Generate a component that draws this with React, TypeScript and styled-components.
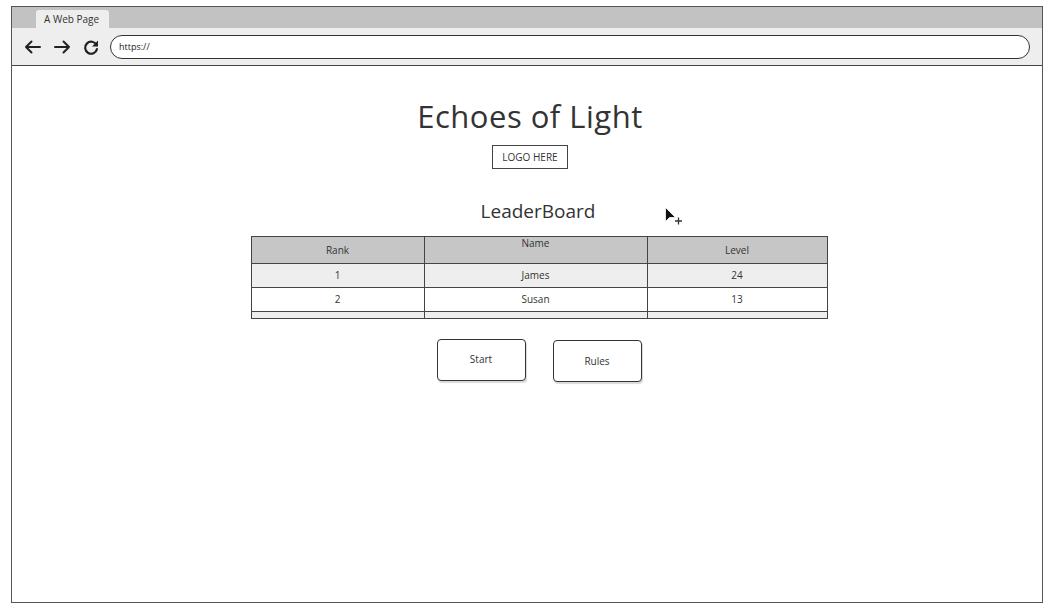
import React from "react";
import styled, { createGlobalStyle } from "styled-components";

const Global = createGlobalStyle`
  html, body { margin: 0; padding: 0; background: #fff; }
  body { font-family: "Open Sans", "Liberation Sans", sans-serif; color: #333; }
`;

const Frame = styled.div`
  box-sizing: border-box;
  margin: 6px 0 0 11px;
  width: 1032px;
  height: 597px;
  border: 1.5px solid #555;
  display: flex;
  flex-direction: column;
  background: #fff;
`;

const TabBar = styled.div`
  height: 21px;
  background: #c2c2c2;
  display: flex;
  align-items: flex-end;
  padding-left: 24px;
`;

const Tab = styled.div`
  height: 18px;
  width: 73px;
  background: #eeeeee;
  border-radius: 3px 3px 0 0;
  font-size: 10px;
  line-height: 18px;
  padding-left: 8px;
  box-sizing: border-box;
  color: #333;
`;

const Toolbar = styled.div`
  height: 37px;
  background: #eeeeee;
  border-bottom: 1.5px solid #444;
  display: flex;
  align-items: center;
  padding: 0 12px 0 11px;
`;

const NavIcon = styled.svg`
  width: 20px;
  height: 20px;
  margin-right: 9px;
  flex: none;
`;

const Address = styled.div`
  flex: 1;
  height: 24px;
  box-sizing: border-box;
  border: 1.5px solid #333;
  border-radius: 12px;
  background: #fff;
  font-size: 9px;
  line-height: 21px;
  padding-left: 8px;
  color: #222;
`;

const Content = styled.div`
  flex: 1;
  display: flex;
  flex-direction: column;
  align-items: center;
  position: relative;
`;

const Title = styled.h1`
  margin: 30px 0 0 6px;
  font-family: "Open Sans", "Liberation Sans", sans-serif;
  font-weight: 400;
  font-size: 31px;
  line-height: 40px;
  color: #333;
  letter-spacing: 0.5px;
`;

const Logo = styled.div`
  margin: 9px 0 0 6px;
  box-sizing: border-box;
  width: 76px;
  height: 24px;
  border: 1px solid #444;
  font-size: 10px;
  line-height: 22px;
  text-align: center;
  color: #333;
`;

const SubTitle = styled.h2`
  margin: 30px 0 0 22px;
  font-weight: 400;
  font-size: 19px;
  line-height: 24px;
  color: #333;
`;

const Table = styled.div`
  margin: 13px 0 0 24px;
  width: 577px;
  box-sizing: border-box;
  border: 1px solid #444;
  display: grid;
  grid-template-columns: 173px 223px 1fr;
`;

const Cell = styled.div<{ $bg: string; $h: number; $top?: boolean; $last?: boolean }>`
  background: ${(p) => p.$bg};
  height: ${(p) => p.$h}px;
  box-sizing: border-box;
  border-right: ${(p) => (p.$last ? "none" : "1px solid #444")};
  border-bottom: 1px solid #444;
  font-size: 10px;
  line-height: ${(p) => (p.$top ? 12 : p.$h - 1)}px;
  text-align: center;
  color: #333;
  &:nth-last-child(-n + 3) { border-bottom: none; }
`;

const Buttons = styled.div`
  display: flex;
  gap: 27px;
  margin: 20px 0 0 24px;
`;

const Button = styled.button<{ $dy: number }>`
  width: 89px;
  height: 42px;
  box-sizing: border-box;
  border: 1.5px solid #333;
  border-radius: 4px;
  background: #fff;
  box-shadow: 1px 2px 1px rgba(0, 0, 0, 0.15);
  font-family: "Open Sans", "Liberation Sans", sans-serif;
  font-size: 10px;
  color: #333;
  margin-top: ${(p) => p.$dy}px;
  padding: 0 0 ${(p) => (p.$dy ? 0 : 3)}px 0;
`;

const Cursor = styled.svg`
  position: absolute;
  left: 652px;
  top: 140px;
  width: 22px;
  height: 22px;
`;

const rows = [
  { rank: "1", name: "James", level: "24", bg: "#eeeeee" },
  { rank: "2", name: "Susan", level: "13", bg: "#ffffff" },
];

export default function App() {
  return (
    <>
      <Global />
      <Frame>
        <TabBar>
          <Tab>A Web Page</Tab>
        </TabBar>
        <Toolbar>
          <NavIcon viewBox="0 0 20 20">
            <path d="M17 10H3M8.5 4.5L3 10l5.5 5.5" fill="none" stroke="#222" strokeWidth="2" strokeLinecap="round" strokeLinejoin="round" />
          </NavIcon>
          <NavIcon viewBox="0 0 20 20">
            <path d="M3 10h14M11.5 4.5L17 10l-5.5 5.5" fill="none" stroke="#222" strokeWidth="2" strokeLinecap="round" strokeLinejoin="round" />
          </NavIcon>
          <NavIcon viewBox="0 0 20 20">
            <path d="M15.5 8A6 6 0 1 0 16 12" fill="none" stroke="#222" strokeWidth="2.2" strokeLinecap="round" />
            <path d="M17 3.5v6h-6z" fill="#222" />
          </NavIcon>
          <Address>https://</Address>
        </Toolbar>
        <Content>
          <Title>Echoes of Light</Title>
          <Logo>LOGO HERE</Logo>
          <SubTitle>LeaderBoard</SubTitle>
          <Table>
            <Cell $bg="#c6c6c6" $h={27}>Rank</Cell>
            <Cell $bg="#c6c6c6" $h={27} $top>Name</Cell>
            <Cell $bg="#c6c6c6" $h={27} $last>Level</Cell>
            {rows.map((r) => (
              <React.Fragment key={r.rank}>
                <Cell $bg={r.bg} $h={24}>{r.rank}</Cell>
                <Cell $bg={r.bg} $h={24}>{r.name}</Cell>
                <Cell $bg={r.bg} $h={24} $last>{r.level}</Cell>
              </React.Fragment>
            ))}
            <Cell $bg="#eeeeee" $h={6} />
            <Cell $bg="#eeeeee" $h={6} />
            <Cell $bg="#eeeeee" $h={6} $last />
          </Table>
          <Buttons>
            <Button $dy={0}>Start</Button>
            <Button $dy={1}>Rules</Button>
          </Buttons>
          <Cursor viewBox="0 0 22 22">
            <path d="M1.5 1.5v14l4-4h6z" fill="#111" stroke="#fff" strokeWidth="0.8" />
            <path d="M14.5 11.5v7M11 15h7" stroke="#333" strokeWidth="1.3" />
          </Cursor>
        </Content>
      </Frame>
    </>
  );
}
